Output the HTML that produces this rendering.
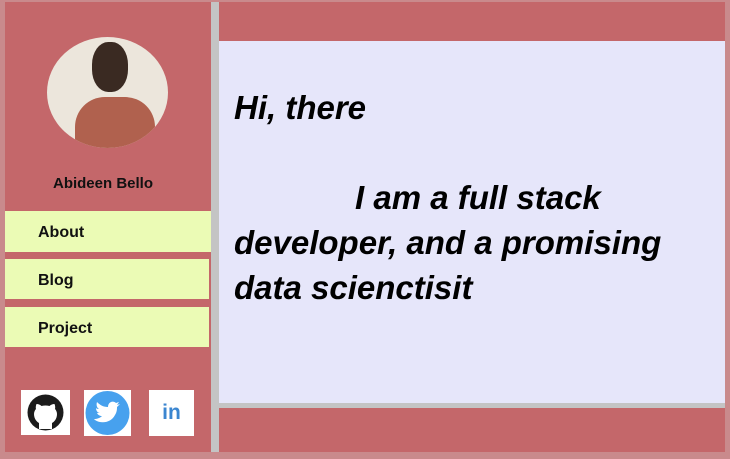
<!DOCTYPE html>
<html><head><style>
*{margin:0;padding:0;box-sizing:border-box}
body{width:730px;height:459px;background:#c98a8c;position:relative;overflow:hidden;font-family:"Liberation Sans",sans-serif}
.a{position:absolute}
.nav{position:absolute;left:5px;background:#ebfbb5;font-size:16px;font-weight:bold;padding-left:33px;padding-top:12px;line-height:20px;color:#111}
.ic{position:absolute;background:#fff;top:390px}
.txt{font-size:33px;color:#000;font-weight:bold;font-style:italic;line-height:45px}
</style></head><body>
<div class="a" style="left:5px;top:2px;width:206px;height:450px;background:#c4676a"></div>
<div class="a" style="left:211px;top:2px;width:8px;height:450px;background:#c4c4c4"></div>
<div class="a" style="left:219px;top:2px;width:506px;height:39px;background:#c4676a"></div>
<div class="a" style="left:219px;top:41px;width:506px;height:362px;background:#e6e6fa"></div>
<div class="a" style="left:219px;top:403px;width:506px;height:5px;background:#c4c4c4"></div>
<div class="a" style="left:219px;top:408px;width:506px;height:44px;background:#c4676a"></div>
<div class="a" style="left:47px;top:37px;width:121px;height:111px;border-radius:50%;overflow:hidden;background:#ece6dc">
 <div class="a" style="left:28px;top:60px;width:80px;height:60px;background:#b0614e;border-radius:30px 30px 0 0"></div>
 <div class="a" style="left:45px;top:5px;width:36px;height:50px;background:#3a2a22;border-radius:45%"></div>
</div>
<div class="a" style="left:5px;top:175px;width:196px;text-align:center;font-size:15px;font-weight:bold;color:#111">Abideen Bello</div>
<div class="nav" style="top:211px;width:206px;height:41px">About</div>
<div class="nav" style="top:259px;width:204px;height:40px">Blog</div>
<div class="nav" style="top:307px;width:204px;height:40px">Project</div>
<div class="ic" style="left:21px;width:49px;height:45px"><svg width="49" height="45" viewBox="0 0 49 45"><circle cx="24.5" cy="22.5" r="18" fill="#1b1b1b"/><path d="M18 39v-6c-2-1-5-4-5-9 0-2 1-4 2-5-0.5-1.5 0-4 0.5-5 2 0 4 1 5 2 2.5-0.7 5.5-0.7 8 0 1-1 3-2 5-2 0.5 1 1 3.5 0.5 5 1 1 2 3 2 5 0 5-3 8-5 9v6z" fill="#fff"/></svg></div>
<div class="ic" style="left:84px;width:47px;height:46px"><svg width="47" height="46"><circle cx="23.5" cy="23" r="22" fill="#47a1ee"/><path d="M11 30c6 4 16 3 20-5 2-3 2-6 2-8l3-3-3 1 2-3-3 1c-3-3-8-1-8 4-5 0-8-2-11-5-1 3 0 6 2 7-1 0-2 0-3-1 0 3 2 5 4 5-1 0-2 0-3 0 1 2 3 3 5 3-2 2-5 3-8 3z" fill="#fff"/></svg></div>
<div class="ic" style="left:149px;width:45px;height:46px;color:#3b86d0;font-weight:bold;font-size:21px;text-align:center;line-height:46px">in</div>
<div class="a txt" style="left:234px;top:85px">Hi, there</div>
<div class="a txt" style="left:234px;top:175px;width:490px"><span style="padding-left:121px">I am a full stack</span><br>developer, and a promising<br>data scienctisit</div>
</body></html>
